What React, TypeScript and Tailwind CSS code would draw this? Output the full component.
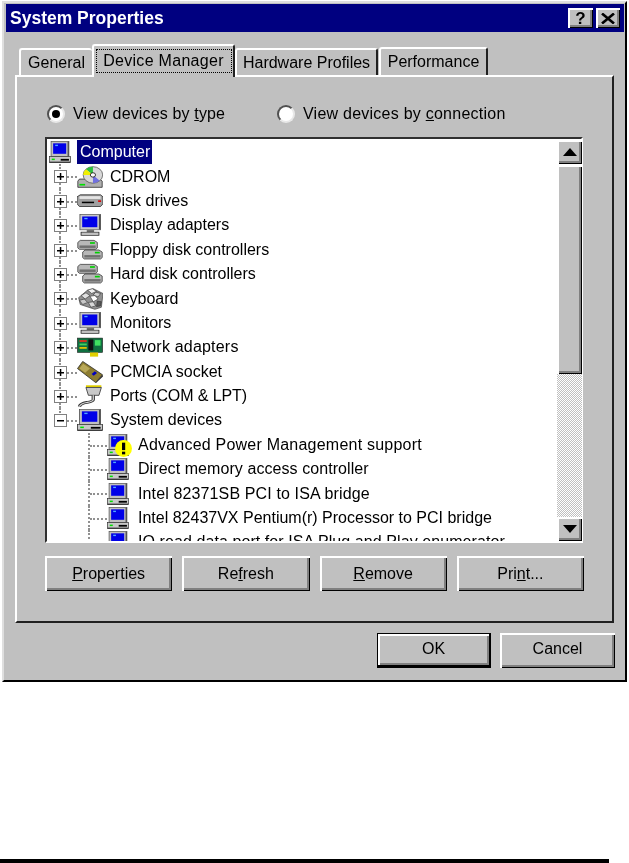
import type { ReactNode } from "react";

const raised = "shadow-[inset_2px_2px_0_#ffffff,inset_-1px_-1px_0_#000000,inset_-3px_-3px_0_#808080]";

type IconKind = "computer" | "cdrom" | "disk" | "display" | "controller" | "keyboard" | "network" | "pcmcia" | "ports" | "system";

type TreeItem = { label: string; icon: IconKind; warn?: boolean; tracking?: string };

const DEVICE_TYPES: TreeItem[] = [
  { label: "CDROM", icon: "cdrom" },
  { label: "Disk drives", icon: "disk" },
  { label: "Display adapters", icon: "display" },
  { label: "Floppy disk controllers", icon: "controller" },
  { label: "Hard disk controllers", icon: "controller" },
  { label: "Keyboard", icon: "keyboard" },
  { label: "Monitors", icon: "display" },
  { label: "Network adapters", icon: "network", tracking: "tracking-[0.2px]" },
  { label: "PCMCIA socket", icon: "pcmcia" },
  { label: "Ports (COM & LPT)", icon: "ports", tracking: "tracking-[-0.1px]" },
];

const SYSTEM_DEVICES: TreeItem[] = [
  { label: "Advanced Power Management support", icon: "system", warn: true, tracking: "tracking-[0.22px]" },
  { label: "Direct memory access controller", icon: "system", tracking: "tracking-[0.07px]" },
  { label: "Intel 82371SB PCI to ISA bridge", icon: "system", tracking: "tracking-[0.13px]" },
  { label: "Intel 82437VX Pentium(r) Processor to PCI bridge", icon: "system" },
  { label: "IO read data port for ISA Plug and Play enumerator", icon: "system", tracking: "tracking-[0.08px]" },
];

function DriveShape({ x, y }: { x: number; y: number }) {
  return (
    <g transform={`translate(${x} ${y})`}>
      <path d="M1.500 0h8.500l2 1.500v4l-1 1H1l-1-1v-4z" fill="#b8b8b8" stroke="#303030" strokeWidth="0.5" />
      <rect x="1" y="3.700" width="10" height="1.800" fill="#707070" />
      <rect x="7.500" y="1.300" width="3" height="1.200" fill="#00d000" />
    </g>
  );
}

function DeviceIcon({ kind }: { kind: IconKind }) {
  let art: ReactNode = null;
  if (kind === "computer" || kind === "system") {
    art = (
      <g>
        <rect x="1.500" y="0.300" width="13" height="11" fill="#c0c0c0" stroke="#505050" strokeWidth="0.5" />
        <rect x="13.500" y="0.500" width="1" height="10.500" fill="#505050" />
        <rect x="3" y="1.700" width="9.500" height="7.600" fill="#0000e8" />
        <rect x="4.500" y="2.700" width="2" height="1" fill="#50a8ff" />
        <rect x="0.300" y="11.300" width="15.400" height="4.400" fill="#c8c8c8" stroke="#303030" strokeWidth="0.5" />
        <rect x="2" y="12.800" width="2.200" height="1.100" fill="#00e000" />
        <rect x="8.500" y="13" width="6" height="1.300" fill="#000" />
        <rect x="0.500" y="15" width="15" height="0.800" fill="#303030" />
      </g>
    );
  } else if (kind === "cdrom") {
    art = (
      <g>
        <path d="M1.500 9.500h12.500l1.500 1.500v4.500H0.500V11z" fill="#b0b0b0" stroke="#202020" strokeWidth="0.5" />
        <rect x="1.500" y="13" width="3.500" height="1.200" fill="#00e000" />
        <circle cx="9.800" cy="6.500" r="6" fill="#d8d8d8" stroke="#505050" strokeWidth="0.5" />
        <path d="M9.800 6.500L5.500 2.300A6 6 0 0 1 9.800 0.500z" fill="#30c040" />
        <path d="M9.800 6.500L3.800 6.500A6 6 0 0 1 5.500 2.300z" fill="#f0f000" />
        <path d="M9.800 6.500L14 10.700A6 6 0 0 1 9.800 12.500z" fill="#7070e0" />
        <circle cx="9.800" cy="6.500" r="1.600" fill="#fff" stroke="#000" strokeWidth="0.5" />
      </g>
    );
  } else if (kind === "disk") {
    art = (
      <g>
        <path d="M2 3.500h12.500l1.500 1.500v5l-1.500 2H1.500L0 10V5z" fill="#a0a0a0" stroke="#202020" strokeWidth="0.5" />
        <rect x="1.500" y="4.500" width="13" height="2" fill="#e4e4e4" />
        <rect x="3" y="8.500" width="7.500" height="1.100" fill="#000" />
        <rect x="13" y="7.500" width="1.800" height="1.200" fill="#e00000" />
      </g>
    );
  } else if (kind === "display") {
    art = (
      <g>
        <rect x="1.800" y="0.300" width="12.700" height="11.200" fill="#c8c8c8" stroke="#505050" strokeWidth="0.5" />
        <rect x="13.500" y="0.500" width="1" height="10.800" fill="#505050" />
        <rect x="3.200" y="1.800" width="9.300" height="7.800" fill="#0000e8" />
        <rect x="4.500" y="2.800" width="2" height="1" fill="#50a8ff" />
        <rect x="6" y="11.500" width="4.500" height="1.700" fill="#707070" />
        <rect x="2.500" y="13.200" width="11" height="2.300" fill="#c0c0c0" stroke="#202020" strokeWidth="0.5" />
      </g>
    );
  } else if (kind === "controller") {
    art = (
      <g>
        <DriveShape x={0.500} y={1} />
        <DriveShape x={3.500} y={8} />
      </g>
    );
  } else if (kind === "keyboard") {
    art = (
      <g stroke="#303030" strokeWidth="0.4">
        <path d="M1 7l5-5 4-1.500L16 4l-1 10-4 1.500L2 12z" fill="#909090" />
        <path d="M6.500 1.500l3-1 2.500 2-3 1.500z" fill="#f0f0f0" />
        <path d="M11.500 3l3 1-1.500 2.500-3-1.500z" fill="#d0d0d0" />
        <path d="M2.500 5.500l3-2 2.500 2-3 2.500z" fill="#e0e0e0" />
        <path d="M8 6l3-.5 2 2.500-3 2z" fill="#fff" />
        <path d="M1.500 9l3-1 2 2.500-3 1.500z" fill="#c8c8c8" />
        <path d="M7 10.500l3-.5 1.500 3-3 1z" fill="#d8d8d8" />
        <path d="M12.500 9.500l2.500.5-.5 3-2.500.5z" fill="#585858" />
      </g>
    );
  } else if (kind === "network") {
    art = (
      <g>
        <rect x="0.300" y="1.500" width="15.400" height="10.500" fill="#107040" stroke="#202020" strokeWidth="0.4" />
        <rect x="1.500" y="3" width="4.500" height="1.300" fill="#e03020" />
        <rect x="1.500" y="5.500" width="4.500" height="1.300" fill="#40d060" />
        <rect x="1.500" y="8" width="4.500" height="1.300" fill="#e0c000" />
        <rect x="7" y="2.500" width="3" height="8" fill="#101010" />
        <rect x="11" y="3" width="3.500" height="4" fill="#40e060" />
        <rect x="8" y="12" width="5" height="3" fill="#e0d000" />
      </g>
    );
  } else if (kind === "pcmcia") {
    art = (
      <g>
        <path d="M0.300 5.500L3.500 0.300 15.700 10 11.500 15.700z" fill="#8c7c30" stroke="#202020" strokeWidth="0.5" />
        <path d="M1.500 5.500L3.800 2 8 5.500 5 8.500z" fill="#b8a858" />
        <path d="M9 9.500l2-2 1.300 1.200-2 2z" fill="#0000c0" />
        <path d="M11.500 15.700l4.200-5.700.3 1.300-4.300 4.700z" fill="#303030" />
      </g>
    );
  } else if (kind === "ports") {
    art = (
      <g>
        <rect x="5.500" y="0.200" width="9.500" height="1.300" fill="#e0d000" />
        <path d="M5.500 1.800h9.500l-1.500 5.700H7z" fill="#c8c8c8" stroke="#202020" strokeWidth="0.5" />
        <path d="M10 7.500v3c0 1.500-2 1.800-4 2.200s-4 1-4.500 3" fill="none" stroke="#303030" strokeWidth="2" />
        <path d="M10 7.500v3c0 1.500-2 1.800-4 2.200s-4 1-4.500 3" fill="none" stroke="#d8d8d8" strokeWidth="0.8" />
      </g>
    );
  }
  return (
    <svg viewBox="0 0 16 16" preserveAspectRatio="none" className="w-full h-full">
      {art}
    </svg>
  );
}

function ExpanderBox({ open }: { open: boolean }) {
  return (
    <svg viewBox="0 0 13 13" className="absolute left-[7px] top-[6px] w-[13px] h-[13px]">
      <rect x="0.500" y="0.500" width="12" height="12" fill="#fff" stroke="#808080" />
      <rect x="3" y="6" width="7" height="1.500" fill="#000" />
      {!open && <rect x="5.800" y="3" width="1.500" height="7" fill="#000" />}
    </svg>
  );
}

function TreeRow({ item, open, last }: { item: TreeItem; open?: boolean; last?: boolean }) {
  return (
    <div className="flex items-center h-[24.4px] shrink-0">
      <div className="relative w-[30px] h-full shrink-0">
        <span className={`absolute left-[12px] top-0 border-l-2 border-dotted border-[#909090] ${last ? "h-1/2" : "h-full"}`} />
        <span className="absolute left-[20px] top-[12px] w-[10px] border-t-2 border-dotted border-[#909090]" />
        <ExpanderBox open={!!open} />
      </div>
      <div className="w-[26px] h-[24px] shrink-0 py-[1px]">
        <DeviceIcon kind={item.icon} />
      </div>
      <span className={`ml-[7px] whitespace-nowrap ${item.tracking ?? ""}`}>{item.label}</span>
    </div>
  );
}

function ChildRow({ item }: { item: TreeItem }) {
  return (
    <div className="flex items-center h-[24.4px] shrink-0">
      <div className="relative w-[60px] h-full shrink-0">
        <span className="absolute left-[41px] top-0 h-full border-l-2 border-dotted border-[#909090]" />
        <span className="absolute left-[43px] top-[12px] w-[17px] border-t-2 border-dotted border-[#909090]" />
      </div>
      <div className="relative w-[22px] h-[22px] shrink-0">
        <DeviceIcon kind={item.icon} />
        {item.warn && (
          <svg viewBox="0 0 16 16" className="absolute left-[8px] top-[6px] w-[17px] h-[17px]">
            <circle cx="8" cy="8" r="8" fill="#ffff00" />
            <rect x="6.600" y="2.500" width="3" height="7" fill="#000" />
            <rect x="6.600" y="11" width="3" height="2.500" fill="#000" />
          </svg>
        )}
      </div>
      <span className={`ml-[9px] whitespace-nowrap ${item.tracking ?? ""}`}>{item.label}</span>
    </div>
  );
}

function Arrow({ down }: { down?: boolean }) {
  return (
    <svg viewBox="0 0 14 8" className="w-[14px] h-[8px]">
      <path d={down ? "M0 0h14L7 8z" : "M7 0l7 8H0z"} fill="#000" />
    </svg>
  );
}

function PushButton({ children, isDefault, className = "" }: { children: ReactNode; isDefault?: boolean; className?: string }) {
  return (
    <button
      className={`flex items-center justify-center h-[35px] ${className} ${
        isDefault
          ? "border border-black border-r-2 border-b-[3px] shadow-[inset_2px_2px_0_#ffffff,inset_-2px_-2px_0_#808080]"
          : raised
      }`}
    >
      {children}
    </button>
  );
}

function Tab({ label, className, selected }: { label: string; className: string; selected?: boolean }) {
  return (
    <div
      className={`flex items-center justify-center rounded-t-[3px] border-t-2 border-l-2 border-white ${className} ${
        selected ? "relative z-10 -mb-[2px] bg-[#c0c0c0] pb-[2px]" : ""
      }`}
    >
      {selected ? (
        <span className="flex items-center justify-center w-[136px] h-[24px] border border-dotted border-black tracking-[0.3px]">{label}</span>
      ) : (
        label
      )}
    </div>
  );
}

export default function App() {
  return (
    <div className="w-[629px] h-[863px] bg-white flex flex-col overflow-hidden text-black text-[16px] leading-none font-['Liberation_Sans',Arial,sans-serif]">
      <div className="ml-[2px] mt-[1px] w-[625px] h-[681px] bg-[#c0c0c0] border-2 border-t-[#dfdfdf] border-l-[#dfdfdf] border-r-black border-b-black pl-[2px] pr-[1px] pt-[1px] blur-[0.5px]">
        {/* Title bar */}
        <div className="h-[28px] bg-[#000080] flex items-center justify-between pl-[4px] pr-[4px]">
          <span className="text-white font-bold text-[17.5px] pt-[2px]">System Properties</span>
          <div className="flex items-center gap-[3px]">
            <div className={`w-[25px] h-[20px] bg-[#c0c0c0] flex items-center justify-center font-bold text-[17px] ${raised}`}>?</div>
            <div className={`w-[24px] h-[20px] bg-[#c0c0c0] flex items-center justify-center ${raised}`}>
              <svg viewBox="0 0 14 11" className="w-[14px] h-[11px]">
                <path d="M1 0.500L13 10.500M13 0.500L1 10.500" stroke="#000" strokeWidth="2.600" />
              </svg>
            </div>
          </div>
        </div>

        {/* Tabs */}
        <div className="flex items-end h-[31px] mt-[12px] pl-[13px]">
          <Tab label="General" className="w-[73px] h-[27px]" />
          <Tab label="Device Manager" className="w-[143px] h-[33px] border-r-2 border-r-[#202020]" selected />
          <Tab label="Hardware Profiles" className="w-[143px] h-[27px] border-r-2 border-r-[#202020]" />
          <Tab label="Performance" className="ml-[1px] w-[109px] h-[28px] border-r-2 border-r-[#202020]" />
        </div>

        {/* Tab page */}
        <div className="ml-[9px] w-[599px] h-[548px] border-2 border-t-white border-l-white border-r-[#202020] border-b-[#202020] pt-[28px] pl-[28px]">
          <div className="flex items-center h-[18px] pl-[2px]">
            <label className="flex items-center gap-[8px] w-[230px]">
              <span className="flex items-center justify-center w-[18px] h-[18px] rounded-full bg-white border-2 border-t-[#505050] border-l-[#505050] border-r-[#e8e8e8] border-b-[#e8e8e8]">
                <span className="w-[8px] h-[8px] rounded-full bg-black" />
              </span>
              <span className="tracking-[0.15px]">View devices by <u>t</u>ype</span>
            </label>
            <label className="flex items-center gap-[8px]">
              <span className="w-[18px] h-[18px] rounded-full bg-white border-2 border-t-[#505050] border-l-[#505050] border-r-[#e8e8e8] border-b-[#e8e8e8]" />
              <span className="tracking-[0.24px]">View devices by <u>c</u>onnection</span>
            </label>
          </div>

          {/* Device tree */}
          <div className="flex mt-[14px] w-[538px] h-[406px] border-2 border-t-[#303030] border-l-[#303030] border-r-white border-b-white bg-white">
            <div className="flex-1 min-w-0 overflow-hidden flex flex-col pt-[1px]">
              <div className="flex items-center h-[24.4px] shrink-0">
                <div className="ml-[2px] mr-[6px] w-[22px] h-[22px] shrink-0">
                  <DeviceIcon kind="computer" />
                </div>
                <span className="bg-[#000080] text-white h-full w-[75px] flex items-center pl-[3px]">Computer</span>
              </div>
              {DEVICE_TYPES.map((item) => (
                <TreeRow key={item.label} item={item} />
              ))}
              <TreeRow item={{ label: "System devices", icon: "system" }} open last />
              {SYSTEM_DEVICES.map((item) => (
                <ChildRow key={item.label} item={item} />
              ))}
            </div>

            {/* Scrollbar */}
            <div className="w-[25px] shrink-0 flex flex-col pt-[1px] mr-[-1px]">
              <div className={`h-[24px] bg-[#c0c0c0] flex items-center justify-center ${raised}`}>
                <Arrow />
              </div>
              <div className={`mt-[1px] h-[209px] bg-[#c0c0c0] ${raised}`} />
              <div className="flex-1 bg-[repeating-conic-gradient(#ffffff_0_25%,#c0c0c0_0_50%)] bg-[length:2px_2px]" />
              <div className={`h-[24px] bg-[#c0c0c0] flex items-center justify-center ${raised}`}>
                <Arrow down />
              </div>
            </div>
          </div>

          <div className="grid grid-cols-4 gap-[10px] mt-[13px] w-[539px]">
            <PushButton><u>P</u>roperties</PushButton>
            <PushButton>Re<u>f</u>resh</PushButton>
            <PushButton><u>R</u>emove</PushButton>
            <PushButton>Pri<u>n</u>t...</PushButton>
          </div>
        </div>

        {/* Dialog buttons */}
        <div className="flex gap-[9px] mt-[10px] ml-[371px]">
          <div className="w-[114px] grid">
            <PushButton isDefault className="pb-[1px]">OK</PushButton>
          </div>
          <div className="w-[115px] grid">
            <PushButton className="pb-[3px]">Cancel</PushButton>
          </div>
        </div>
      </div>

      <div className="mt-auto w-[609px] h-[4px] bg-black" />
    </div>
  );
}
